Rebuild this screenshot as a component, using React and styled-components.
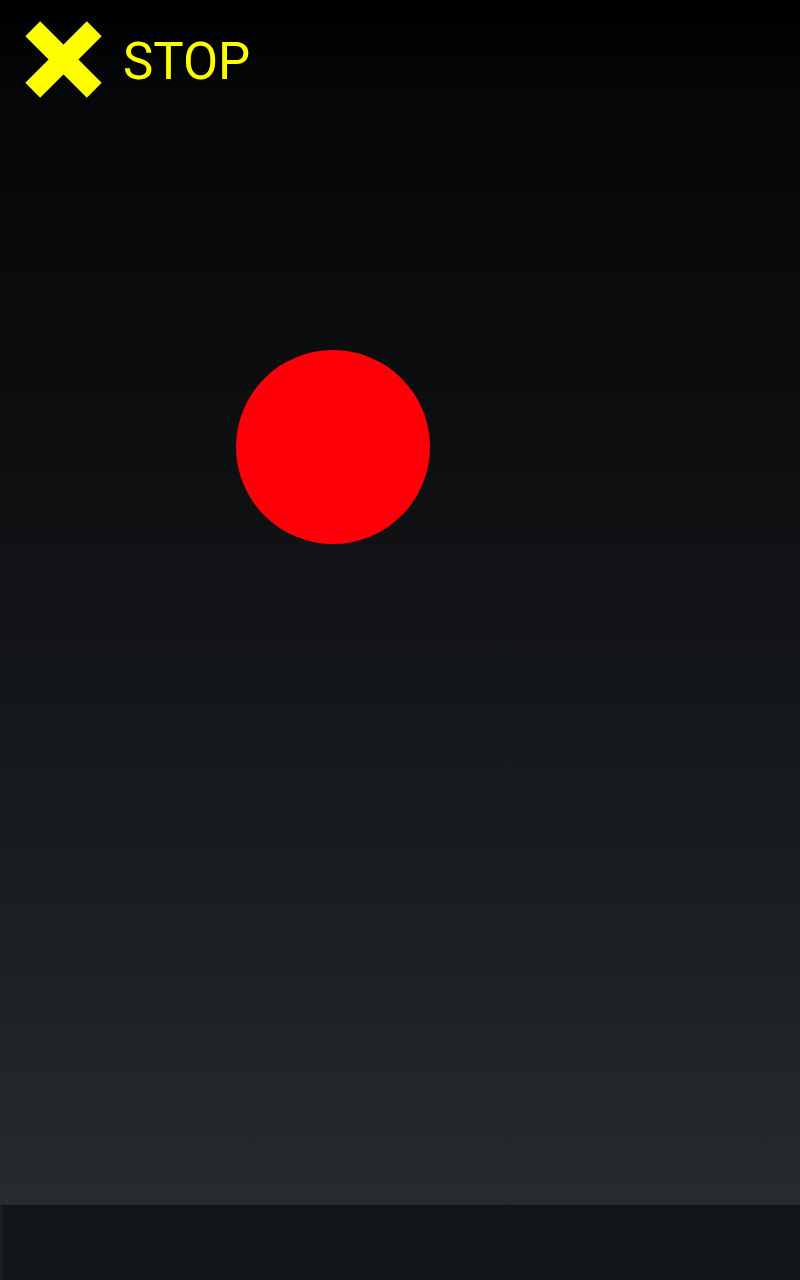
import React from "react";
import styled, { createGlobalStyle } from "styled-components";

const Global = createGlobalStyle`
  html, body { margin: 0; padding: 0; background: #000; }
  #root { width: 800px; height: 1280px; }
`;

const Screen = styled.div`
  width: 800px;
  height: 1280px;
  display: flex;
  flex-direction: column;
  background: linear-gradient(180deg, #000000 0px, #050607 100px, #0e1012 500px, #1a1e21 900px, #272b2f 1205px);
  font-family: Roboto, "Noto Sans", sans-serif;
  overflow: hidden;
`;

const Header = styled.div`
  display: flex;
  align-items: center;
  padding: 21px 25px 0 25px;
  height: 77px;
`;

const StopButton = styled.button`
  display: flex;
  align-items: center;
  gap: 21px;
  border: none;
  background: none;
  padding: 0;
  cursor: pointer;
  font-family: Roboto, "Noto Sans", sans-serif;
`;

const StopLabel = styled.span`
  color: #ffff00;
  font-family: Roboto, "Noto Sans", sans-serif;
  font-size: 51px;
  font-weight: 400;
  line-height: 1;
  margin-top: 4px;
`;

const Stage = styled.div`
  position: relative;
  flex: 1;
`;

const Ball = styled.div`
  position: absolute;
  left: ${(p) => p.x}px;
  top: ${(p) => p.y}px;
  width: ${(p) => p.size}px;
  height: ${(p) => p.size}px;
  border-radius: 50%;
  background: #ff0008;
`;

const BottomBar = styled.div`
  height: 75px;
  background: #131618;
  border-top: 1px solid #0f1214;
  border-left: 2px solid #1b1f22;
  box-sizing: border-box;
`;

const CrossIcon = () => (
  <svg width="77" height="77" viewBox="0 0 77 77">
    <g fill="#ffff00">
      <rect x="-5" y="28" width="87" height="21" transform="rotate(45 38.5 38.5)" />
      <rect x="-5" y="28" width="87" height="21" transform="rotate(-45 38.5 38.5)" />
    </g>
  </svg>
);

export default function App() {
  return (
    <>
      <Global />
      <Screen>
        <Header>
          <StopButton>
            <CrossIcon />
            <StopLabel>STOP</StopLabel>
          </StopButton>
        </Header>
        <Stage>
          <Ball x={236} y={252} size={194} />
        </Stage>
        <BottomBar />
      </Screen>
    </>
  );
}
